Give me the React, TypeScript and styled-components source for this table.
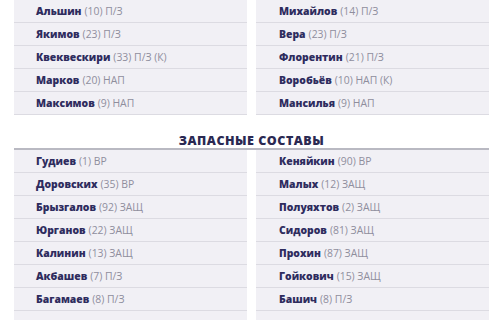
import React from "react";
import styled, { createGlobalStyle } from "styled-components";

const Global = createGlobalStyle`
  html, body { margin: 0; padding: 0; background: #ffffff; }
  body { font-family: "Open Sans", "Noto Sans", sans-serif; }
`;

const Page = styled.div`
  width: 500px;
  height: 320px;
  overflow: hidden;
  box-sizing: border-box;
  padding: 0 11px 0 14px;
  display: flex;
  flex-direction: column;
`;

const Columns = styled.div<{ $bordered?: boolean }>`
  display: grid;
  grid-template-columns: 233px 233px;
  column-gap: 9px;
  border-top: ${(p) => (p.$bordered ? "2px solid #b9b9c2" : "none")};
`;

const List = styled.div`
  display: flex;
  flex-direction: column;
`;

const Row = styled.div<{ $right?: boolean }>`
  height: 22px;
  border-bottom: 1px solid #dcdbe2;
  background: #f1f0f5;
  display: flex;
  align-items: center;
  padding-left: ${(p) => (p.$right ? "23px" : "22px")};
  font-size: 10.4px;
  white-space: nowrap;
`;

const Name = styled.span`
  font-weight: 800;
  color: #2e2c5e;
  margin-right: 3px;
`;

const Info = styled.span`
  color: #8f8e9d;
  font-weight: 400;
`;

const Title = styled.div`
  height: 40px;
  box-sizing: border-box;
  padding-top: 19px;
  text-align: center;
  font-size: 12.5px;
  font-weight: 800;
  color: #2a2952;
  letter-spacing: 0.5px;
  line-height: 14px;
`;

type P = [string, string];

const startLeft: P[] = [
  ["Альшин", "(10) П/З"],
  ["Якимов", "(23) П/З"],
  ["Квеквескири", "(33) П/З (К)"],
  ["Марков", "(20) НАП"],
  ["Максимов", "(9) НАП"],
];
const startRight: P[] = [
  ["Михайлов", "(14) П/З"],
  ["Вера", "(23) П/З"],
  ["Флорентин", "(21) П/З"],
  ["Воробьёв", "(10) НАП (К)"],
  ["Мансилья", "(9) НАП"],
];
const benchLeft: P[] = [
  ["Гудиев", "(1) ВР"],
  ["Доровских", "(35) ВР"],
  ["Брызгалов", "(92) ЗАЩ"],
  ["Юрганов", "(22) ЗАЩ"],
  ["Калинин", "(13) ЗАЩ"],
  ["Акбашев", "(7) П/З"],
  ["Багамаев", "(8) П/З"],
  ["", ""],
];
const benchRight: P[] = [
  ["Кеняйкин", "(90) ВР"],
  ["Малых", "(12) ЗАЩ"],
  ["Полуяхтов", "(2) ЗАЩ"],
  ["Сидоров", "(81) ЗАЩ"],
  ["Прохин", "(87) ЗАЩ"],
  ["Гойкович", "(15) ЗАЩ"],
  ["Башич", "(8) П/З"],
  ["", ""],
];

const PlayerList = ({ items, right }: { items: P[]; right?: boolean }) => (
  <List>
    {items.map(([n, i], k) => (
      <Row key={k} $right={right}>
        {n && <Name>{n}</Name>}
        {i && <Info>{i}</Info>}
      </Row>
    ))}
  </List>
);

export default function App() {
  return (
    <>
      <Global />
      <Page>
        <Columns>
          <PlayerList items={startLeft} />
          <PlayerList items={startRight} right />
        </Columns>
        <Title>ЗАПАСНЫЕ СОСТАВЫ</Title>
        <Columns $bordered>
          <PlayerList items={benchLeft} />
          <PlayerList items={benchRight} right />
        </Columns>
      </Page>
    </>
  );
}
